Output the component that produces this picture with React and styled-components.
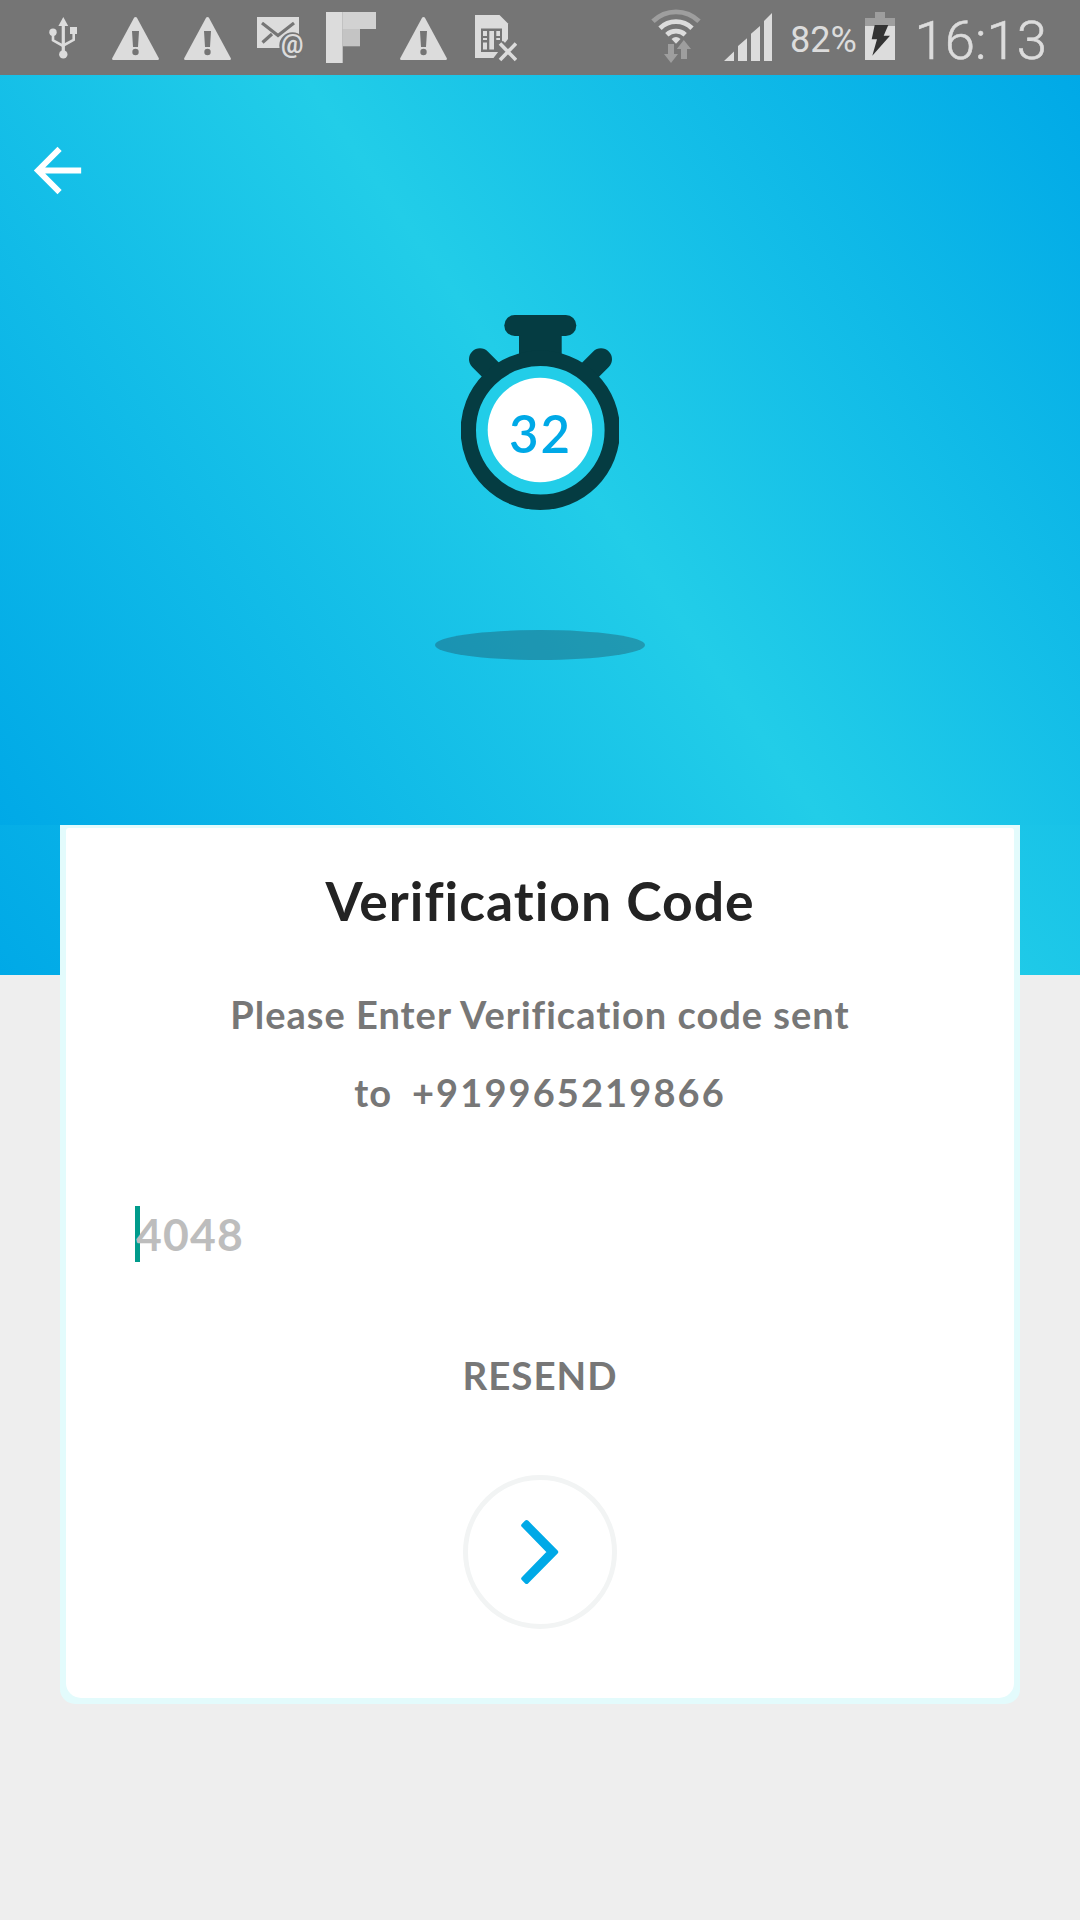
import React from 'react';
import styled, { createGlobalStyle } from 'styled-components';

const BAR = '#757575';
const LIGHT = '#dcdcdc';
const DIM = '#9e9e9e';
const BLUE = '#00a9e7';
const CYAN = '#22cde8';
const DARK = '#053c42';

const GlobalStyle = createGlobalStyle`
  html, body { margin: 0; padding: 0; }
  body { background: #eee; }
  * { box-sizing: border-box; }
`;

const Screen = styled.div`
  width: 1080px;
  height: 1920px;
  display: flex;
  flex-direction: column;
  overflow: hidden;
  font-family: Lato, "Open Sans", sans-serif;
`;

const StatusBar = styled.header`
  height: 75px;
  flex: none;
  display: flex;
  justify-content: space-between;
  padding: 0 35px 0 49px;
  background: ${BAR};
  color: ${LIGHT};
  font-family: Roboto, sans-serif;
  overflow: hidden;
`;

const StatusGroup = styled.div`
  display: flex;
  align-items: flex-start;
`;

const Glyph = styled.svg`
  display: block;
  flex: none;
  height: 75px;
  margin-left: ${(p) => p.$gap || 0}px;
`;

const BatteryLevel = styled.span`
  width: 93px;
  padding-left: 18px;
  font-size: 36px;
  line-height: 80px;
  white-space: nowrap;
`;

const Clock = styled.span`
  width: 150px;
  padding-left: 19.5px;
  font-size: 54.5px;
  font-weight: 300;
  line-height: 81px;
  white-space: nowrap;
  -webkit-text-stroke: 0.6px ${LIGHT};
`;

const Main = styled.main`
  flex: 1;
  display: flex;
  flex-direction: column;
  align-items: center;
  background: linear-gradient(50.19deg, ${BLUE}, ${CYAN} 51.5%, ${BLUE}) no-repeat 0 0 / 100% 900px, #eee;
`;

const Hero = styled.section`
  width: 100%;
  height: 750px;
  flex: none;
  display: flex;
  flex-direction: column;
  align-items: center;
  background: linear-gradient(55.22deg, ${BLUE}, ${CYAN} 51.5%, ${BLUE});
`;

const TopBar = styled.nav`
  width: 100%;
  height: 240px;
  padding: 60px 22px 0;
`;

const IconButton = styled.button`
  display: block;
  padding: 0;
  border: 0;
  background: none;
  line-height: 0;
`;

const Stopwatch = styled.div`
  position: relative;
  width: 158px;
  height: 195px;
  svg { display: block; }
`;

const Seconds = styled.span`
  position: absolute;
  left: 48px;
  top: 88.6px;
  font-size: 51px;
  font-weight: 600;
  line-height: 60px;
  letter-spacing: 2px;
  color: ${BLUE};
`;

const Shadow = styled.div`
  width: 210px;
  height: 30px;
  margin-top: 120px;
  border-radius: 50%;
  background: rgba(36, 36, 48, 0.29);
`;

const CardFrame = styled.section`
  width: 960px;
  height: 879px;
  flex: none;
  padding: 3px 6px 6px;
  border-radius: 0 0 15px 15px;
  background: #e3fbfc;
`;

const Card = styled.div`
  height: 100%;
  display: flex;
  flex-direction: column;
  align-items: center;
  padding: 40px 69px 0;
  border-radius: 3px 3px 15px 15px;
  background: #fff;
`;

const Title = styled.h1`
  margin: 0;
  font-size: 53.5px;
  font-weight: 700;
  line-height: 64px;
  letter-spacing: 1px;
  color: #232323;
`;

const Message = styled.p`
  margin: 43px 0 0;
  display: flex;
  flex-direction: column;
  align-items: center;
  font-size: 38px;
  font-weight: 700;
  line-height: 78px;
  letter-spacing: 1px;
  color: #777;
`;

const PhoneLine = styled.span`
  display: flex;
  gap: 20px;
`;

const Phone = styled.span`
  letter-spacing: 2.1px;
`;

const CodeField = styled.div`
  position: relative;
  align-self: stretch;
  height: 56px;
  margin-top: 75px;
  font-size: 44.5px;
  font-weight: 700;
  line-height: 55px;
  letter-spacing: 1.2px;
  color: #bdbdbd;
`;

const Caret = styled.i`
  position: absolute;
  left: 0;
  top: 0;
  width: 5px;
  height: 56px;
  background: #009b8b;
`;

const Hint = styled.span`
  position: relative;
  padding-left: 1px;
`;

const Resend = styled.button`
  margin-top: 88px;
  padding: 0;
  border: 0;
  background: none;
  font: 700 38.5px/50px Lato, sans-serif;
  letter-spacing: 1px;
  color: #777;
`;

const NextButton = styled.button`
  width: 154px;
  height: 154px;
  margin-top: 75px;
  padding: 0;
  display: flex;
  align-items: center;
  justify-content: center;
  border: 5px solid #f2f4f4;
  border-radius: 50%;
  background: #fff;
`;

const Usb = () => (
  <Glyph width="28" viewBox="49 0 28 75">
    <g fill="none" stroke={LIGHT} strokeWidth="2.6">
      <path d="M63.3 25V52" strokeWidth="3.2" />
      <path d="M53 33V40.3L63.3 46" />
      <path d="M73.7 32V39.8L63.3 45.5" />
    </g>
    <g fill={LIGHT}>
      <path d="M63.3 17L68.2 26H58.4Z" />
      <circle cx="53" cy="32.3" r="3.7" />
      <circle cx="63.3" cy="54.4" r="4.2" />
      <path d="M70 27H77V34H70Z" />
    </g>
  </Glyph>
);

const Warning = ({ gap }) => (
  <Glyph $gap={gap} width="47" viewBox="0 0 47 75">
    <path d="M22.2 17.6Q23.5 16.2 24.8 17.6L46.8 58.2Q47.2 60 45.8 60H1.2Q-.2 60 .2 58.2Z" fill={LIGHT} />
    <path d="M20 31H27L26 47H21Z" fill={BAR} />
    <circle cx="23.5" cy="52" r="3.2" fill={BAR} />
  </Glyph>
);

const Mail = () => (
  <Glyph $gap={26} width="46" viewBox="257 0 46 75">
    <path d="M257 17H299V48H257Z" fill={LIGHT} />
    <path d="M262 23L278 35.5L294 23M262.5 42.5L272 34" fill="none" stroke={BAR} strokeWidth="3.2" />
    <circle cx="292.5" cy="45.5" r="13.2" fill={BAR} />
    <text x="281" y="52.5" fontFamily="Roboto, sans-serif" fontWeight="700" fontSize="25" fill={LIGHT}>@</text>
  </Glyph>
);

const Flipboard = () => (
  <Glyph $gap={23} width="50" viewBox="326 0 50 75">
    <path d="M326 12H342.7V63H326Z" fill={LIGHT} />
    <path d="M342.7 12H376V29H342.7Z" fill="#d2d2d2" />
    <path d="M342.7 29H360V46.3H342.7Z" fill="#c4c4c4" />
  </Glyph>
);

const Sim = () => (
  <Glyph $gap={28} width="42" viewBox="475 0 42 75">
    <path d="M475 15H499.5L508 23.5V39L493.5 58H475Z" fill={LIGHT} />
    <path d="M481 28.5H502V52H481Z" fill={BAR} />
    <path d="M483 31H487V36H483ZM489.3 31H494V49.5H489.3ZM496.3 31H500V36H496.3ZM483 38H487V40H483ZM483 42.5H487V49.5H483ZM496.3 38H500V40H496.3Z" fill={LIGHT} />
    <path d="M500 43.5L516 60M516 43.5L500 60" stroke={BAR} strokeWidth="8" />
    <path d="M500 43.5L516 60M516 43.5L500 60" stroke={LIGHT} strokeWidth="3.6" />
  </Glyph>
);

const Wifi = () => (
  <Glyph width="50" viewBox="651 0 50 75">
    <g fill="none" strokeWidth="4.8">
      <path d="M653 21.3A32.6 32.6 0 0 1 699 21.3" stroke={DIM} />
      <path d="M660 28.2A23 23 0 0 1 692 28.2" stroke={LIGHT} />
      <path d="M666.8 34.8A13.6 13.6 0 0 1 685.2 34.8" stroke={LIGHT} />
    </g>
    <path d="M671.5 39Q676 35 680.5 39L676 43.8Z" fill={LIGHT} />
    <path d="M668 44H674V54H678L671 63L664 54H668Z" fill={DIM} />
    <path d="M683.8 40L691 49H687V59H681V49H676.8Z" fill={DIM} />
  </Glyph>
);

const Signal = () => (
  <Glyph $gap={23} width="48" viewBox="724 0 48 75">
    <path d="M724 61L734 51.5V61ZM738 61V46L747 38.3V61ZM751 61V33.8L760 26V61ZM764 61V21L772 13V61Z" fill={LIGHT} />
  </Glyph>
);

const Battery = () => (
  <Glyph width="30" viewBox="865 0 30 75">
    <path d="M875 12H885V18H895V26H865V18H875Z" fill={DIM} />
    <path d="M865 26H895V60H865Z" fill={LIGHT} />
    <path d="M874.7 25H888.3L883.7 35.7H890L872.3 55.7L877 39.3H871.7Z" fill="#333" />
  </Glyph>
);

export default function App() {
  return (
    <>
      <GlobalStyle />
      <Screen>
        <StatusBar>
          <StatusGroup>
            <Usb />
            <Warning gap={35} />
            <Warning gap={25} />
            <Mail />
            <Flipboard />
            <Warning gap={24} />
            <Sim />
          </StatusGroup>
          <StatusGroup>
            <Wifi />
            <Signal />
            <BatteryLevel>82%</BatteryLevel>
            <Battery />
            <Clock>16:13</Clock>
          </StatusGroup>
        </StatusBar>
        <Main>
          <Hero>
            <TopBar>
              <IconButton aria-label="Back">
                <svg width="71" height="71" viewBox="0 0 24 24" fill="#fff">
                  <path d="M20 11H7.83l5.59-5.59L12 4l-8 8 8 8 1.41-1.41L7.83 13H20v-2z" />
                </svg>
              </IconButton>
            </TopBar>
            <Stopwatch>
              <svg width="158" height="195" viewBox="461 315 158 195">
                <rect x="504.3" y="315" width="72" height="21" rx="10.5" fill={DARK} />
                <path d="M519 330H561.7V362H519Z" fill={DARK} />
                <path d="M480 359.2L497 376.2M601 359.2L584 376.2" stroke={DARK} strokeWidth="22" strokeLinecap="round" />
                <circle cx="540.3" cy="430.3" r="72" fill={CYAN} stroke={DARK} strokeWidth="15.4" />
                <circle cx="540" cy="430" r="52.3" fill="#fff" />
              </svg>
              <Seconds>32</Seconds>
            </Stopwatch>
            <Shadow />
          </Hero>
          <CardFrame>
            <Card>
              <Title>Verification Code</Title>
              <Message>
                <span>Please Enter Verification code sent</span>
                <PhoneLine>
                  <span>to</span>
                  <Phone>+919965219866</Phone>
                </PhoneLine>
              </Message>
              <CodeField>
                <Caret />
                <Hint>4048</Hint>
              </CodeField>
              <Resend>RESEND</Resend>
              <NextButton aria-label="Continue">
                <svg width="44" height="72" viewBox="518 1516 44 72">
                  <path
                    d="M526.6 1522L556.2 1552L526.6 1582L523.2 1578.6L549.2 1552L523.2 1525.4Z"
                    fill={BLUE}
                    stroke={BLUE}
                    strokeWidth="4"
                    strokeLinejoin="round"
                  />
                </svg>
              </NextButton>
            </Card>
          </CardFrame>
        </Main>
      </Screen>
    </>
  );
}
